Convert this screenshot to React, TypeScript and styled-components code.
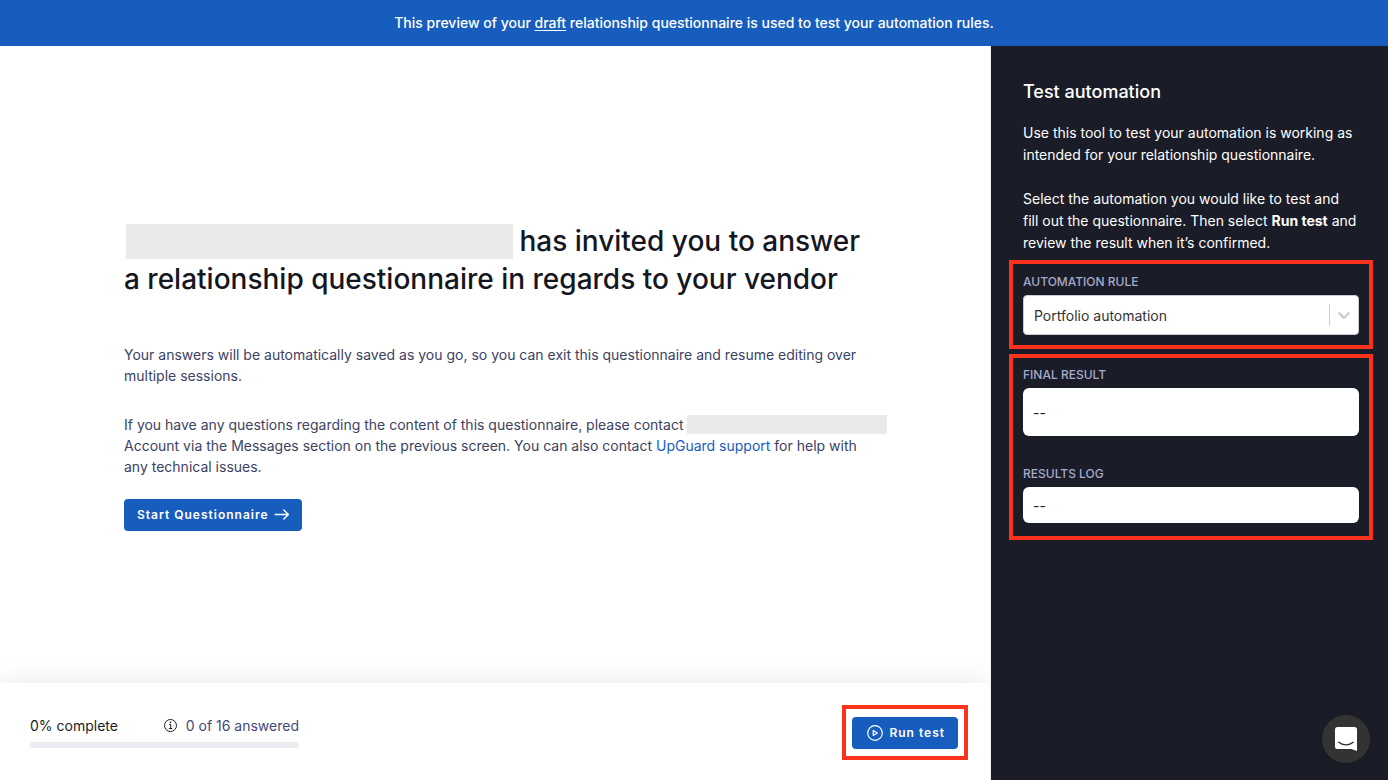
import React from "react";
import styled, { createGlobalStyle } from "styled-components";

const GlobalStyle = createGlobalStyle`
  *, *::before, *::after { box-sizing: border-box; }
  body {
    margin: 0;
    background: #ffffff;
    color: #1a1c27;
    font-family: Inter, "Liberation Sans", sans-serif;
    font-size: 14px;
    line-height: 21px;
    -webkit-font-smoothing: antialiased;
  }
  h1, h2, p { margin: 0; }
`;

const Page = styled.div`
  display: flex;
  flex-direction: column;
  min-height: 100vh;
`;

const Banner = styled.header`
  padding: 12px 24px;
  background: #175dbe;
  color: #ffffff;
  font-weight: 500;
  line-height: 22px;
  text-align: center;
`;

const Underlined = styled.span`
  text-decoration: underline;
  text-underline-offset: 2px;
`;

const Body = styled.div`
  display: flex;
  flex: 1;
`;

const Main = styled.main`
  display: flex;
  flex: 1;
  flex-direction: column;
  min-width: 0;
  border-right: 1px solid #ebebf2;
`;

const Intro = styled.section`
  display: flex;
  flex: 1;
  flex-direction: column;
  align-items: flex-start;
  justify-content: center;
  padding: 24px 100px 0 124px;
`;

const Title = styled.h1`
  margin-bottom: 46px;
  color: #141721;
  font-size: 28px;
  font-weight: 500;
  line-height: 38px;
`;

const Redacted = styled.span`
  display: inline-block;
  width: 200px;
  height: 19px;
  background: #eaeaea;
  vertical-align: -4px;
`;

const TitleRedacted = styled(Redacted)`
  width: 387px;
  height: 35px;
  margin: 0 -1px 0 2px;
  vertical-align: -8px;
`;

const Paragraph = styled.p`
  color: #3c4264;
  white-space: nowrap;

  & + & { margin-top: 28px; }
`;

const Link = styled.a`
  color: #175dbe;
  text-decoration: none;
`;

const Button = styled.button`
  display: inline-flex;
  align-items: center;
  height: 32px;
  padding: 0 13px 0 15px;
  gap: 6px;
  border: 0;
  border-radius: 4px;
  background: #175dbe;
  color: #ffffff;
  font: 600 12px/18px Inter, "Liberation Sans", sans-serif;
  letter-spacing: 1px;
  white-space: nowrap;
  cursor: pointer;
`;

const StartButton = styled(Button)`
  margin-top: 22px;
  padding: 0 12px 0 13px;
  gap: 5px;
`;

const Footer = styled.footer`
  display: flex;
  align-items: flex-start;
  justify-content: space-between;
  height: 97px;
  padding: 22px 22px 0 30px;
  background: #ffffff;
  box-shadow: 0 0 24px rgba(0, 0, 0, 0.1);
  clip-path: inset(-32px 0 0 0);
`;

const Progress = styled.div`
  display: flex;
  flex-direction: column;
  width: 269px;
  gap: 5px;
  padding-top: 10px;
`;

const ProgressText = styled.div`
  display: flex;
  justify-content: space-between;
  line-height: 22px;
`;

const Answered = styled.span`
  display: flex;
  align-items: center;
  gap: 8px;
  color: #434a79;
`;

const Track = styled.div`
  height: 6px;
  border-radius: 3px;
  background: #ebebf2;
`;

const Highlight = styled.div<{ $padding: string }>`
  padding: ${(p) => p.$padding};
  border: 4px solid #fb331d;
`;

const Sidebar = styled.aside`
  display: flex;
  flex: 0 0 397px;
  flex-direction: column;
  gap: 5px;
  padding: 32px 15px 32px 18px;
  background: #1a1c27;
`;

const Help = styled.section`
  padding: 0 0 1px 14px;
  color: #ffffff;
  line-height: 22px;
  white-space: nowrap;

  p + p { margin-top: 22px; }
  strong { font-weight: 700; }
`;

const SideTitle = styled.h2`
  margin-bottom: 17px;
  font-size: 18px;
  font-weight: 500;
  line-height: 27px;
`;

const Label = styled.label`
  display: block;
  margin-bottom: 4px;
  color: #a6aacb;
  font-size: 12px;
  font-weight: 500;
  line-height: 18px;
`;

const SelectWrap = styled.div`
  position: relative;
`;

const Select = styled.select`
  display: block;
  width: 100%;
  height: 40px;
  padding: 0 40px 0 10px;
  border: 1px solid #cccccc;
  border-radius: 4px;
  appearance: none;
  background: #ffffff;
  color: #333333;
  font: 400 14px/21px Inter, "Liberation Sans", sans-serif;
`;

const Indicator = styled.span`
  position: absolute;
  top: 9px;
  right: 1px;
  display: flex;
  align-items: center;
  height: 22px;
  padding: 0 4px;
  border-left: 1px solid #cccccc;
  color: #cccccc;
  pointer-events: none;
`;

const Result = styled.output<{ $height: number }>`
  display: flex;
  align-items: center;
  height: ${(p) => p.$height}px;
  padding: 0 10px;
  border-radius: 6px;
  background: #ffffff;
  color: #1a1c27;
`;

const Field = styled.div`
  & + & { margin-top: 29px; }
`;

const Chat = styled.button`
  position: fixed;
  right: 18px;
  bottom: 17px;
  display: flex;
  align-items: center;
  justify-content: center;
  width: 48px;
  height: 48px;
  padding: 0;
  border: 0;
  border-radius: 50%;
  background: #333333;
  box-shadow: 0 1px 6px rgba(0, 0, 0, 0.1);
  cursor: pointer;
`;

const ArrowIcon = () => (
  <svg width="16" height="12" viewBox="0 0 16 12" fill="none" stroke="currentColor" strokeWidth="1.4" strokeLinecap="round" strokeLinejoin="round" aria-hidden="true">
    <path d="M1.200 5.500h13.200M9.800 1.100 14.400 5.500l-4.600 4.400" />
  </svg>
);

const PlayIcon = () => (
  <svg width="16" height="16" viewBox="0 0 16 16" fill="none" stroke="currentColor" strokeWidth="1.2" strokeLinejoin="round" aria-hidden="true">
    <circle cx="8" cy="8" r="7.3" />
    <path d="M6.200 5.500v5L10.400 8z" />
  </svg>
);

const InfoIcon = () => (
  <svg width="14" height="14" viewBox="0 0 14 14" fill="none" stroke="#1a1c27" strokeWidth="1" aria-hidden="true">
    <circle cx="6.5" cy="6.5" r="6" />
    <path d="M5.200 5.500h1.500v4M4.900 9.500h3.400" />
    <circle cx="6.5" cy="3.400" r="0.8" fill="#1a1c27" stroke="none" />
  </svg>
);

const ChevronIcon = () => (
  <svg width="20" height="20" viewBox="0 0 20 20" fill="currentColor" aria-hidden="true">
    <path d="M4.516 7.548c0.436-0.446 1.043-0.481 1.576 0l3.908 3.747 3.908-3.747c0.533-0.481 1.141-0.446 1.574 0 0.436 0.445 0.408 1.197 0 1.615-0.406 0.418-4.695 4.502-4.695 4.502-0.217 0.223-0.502 0.335-0.787 0.335s-0.57-0.112-0.789-0.335c0 0-4.287-4.084-4.695-4.502s-0.436-1.17 0-1.615z" />
  </svg>
);

const ChatIcon = () => (
  <svg width="22" height="24" viewBox="0 0 22 24" fill="none" aria-hidden="true">
    <path d="M2.6 0h16.8A2.6 2.6 0 0 1 22 2.6V24l-5.6-2H2.6A2.6 2.6 0 0 1 0 19.400V2.6A2.6 2.6 0 0 1 2.600 0z" fill="#ffffff" />
    <path d="M3.800 15.200c4.200 3.500 10.200 3.500 14.400 0" stroke="#333333" strokeWidth="1.400" strokeLinecap="round" />
  </svg>
);

export default function App() {
  return (
    <>
      <GlobalStyle />
      <Page>
        <Banner>
          This preview of your <Underlined>draft</Underlined> relationship questionnaire is used to test your automation rules.
        </Banner>
        <Body>
          <Main>
            <Intro>
              <Title>
                <TitleRedacted /> has invited you to answer
                <br />
                a relationship questionnaire in regards to your vendor
              </Title>
              <Paragraph>
                Your answers will be automatically saved as you go, so you can exit this questionnaire and resume editing over
                <br />
                multiple sessions.
              </Paragraph>
              <Paragraph>
                If you have any questions regarding the content of this questionnaire, please contact{" "}
                <Redacted />
                <br />
                Account via the Messages section on the previous screen. You can also contact{" "}
                <Link href="#support">UpGuard support</Link> for help with
                <br />
                any technical issues.
              </Paragraph>
              <StartButton type="button">
                Start Questionnaire
                <ArrowIcon />
              </StartButton>
            </Intro>
            <Footer>
              <Progress>
                <ProgressText>
                  <span>0% complete</span>
                  <Answered>
                    <InfoIcon />
                    0 of 16 answered
                  </Answered>
                </ProgressText>
                <Track role="progressbar" aria-label="Questionnaire progress" aria-valuenow={0} />
              </Progress>
              <Highlight $padding="8px 6px 7px">
                <Button type="button">
                  <PlayIcon />
                  Run test
                </Button>
              </Highlight>
            </Footer>
          </Main>
          <Sidebar>
            <Help>
              <SideTitle>Test automation</SideTitle>
              <p>
                Use this tool to test your automation is working as
                <br />
                intended for your relationship questionnaire.
              </p>
              <p>
                Select the automation you would like to test and
                <br />
                fill out the questionnaire. Then select <strong>Run test</strong> and
                <br />
                review the result when it’s confirmed.
              </p>
            </Help>
            <Highlight $padding="9px 10px 10px">
              <Label htmlFor="rule">AUTOMATION RULE</Label>
              <SelectWrap>
                <Select id="rule" defaultValue="portfolio">
                  <option value="portfolio">Portfolio automation</option>
                </Select>
                <Indicator>
                  <ChevronIcon />
                </Indicator>
              </SelectWrap>
            </Highlight>
            <Highlight $padding="8px 10px 13px">
              <Field>
                <Label htmlFor="final">FINAL RESULT</Label>
                <Result id="final" $height={48}>--</Result>
              </Field>
              <Field>
                <Label htmlFor="log">RESULTS LOG</Label>
                <Result id="log" $height={36}>--</Result>
              </Field>
            </Highlight>
          </Sidebar>
        </Body>
        <Chat type="button" aria-label="Open chat">
          <ChatIcon />
        </Chat>
      </Page>
    </>
  );
}
